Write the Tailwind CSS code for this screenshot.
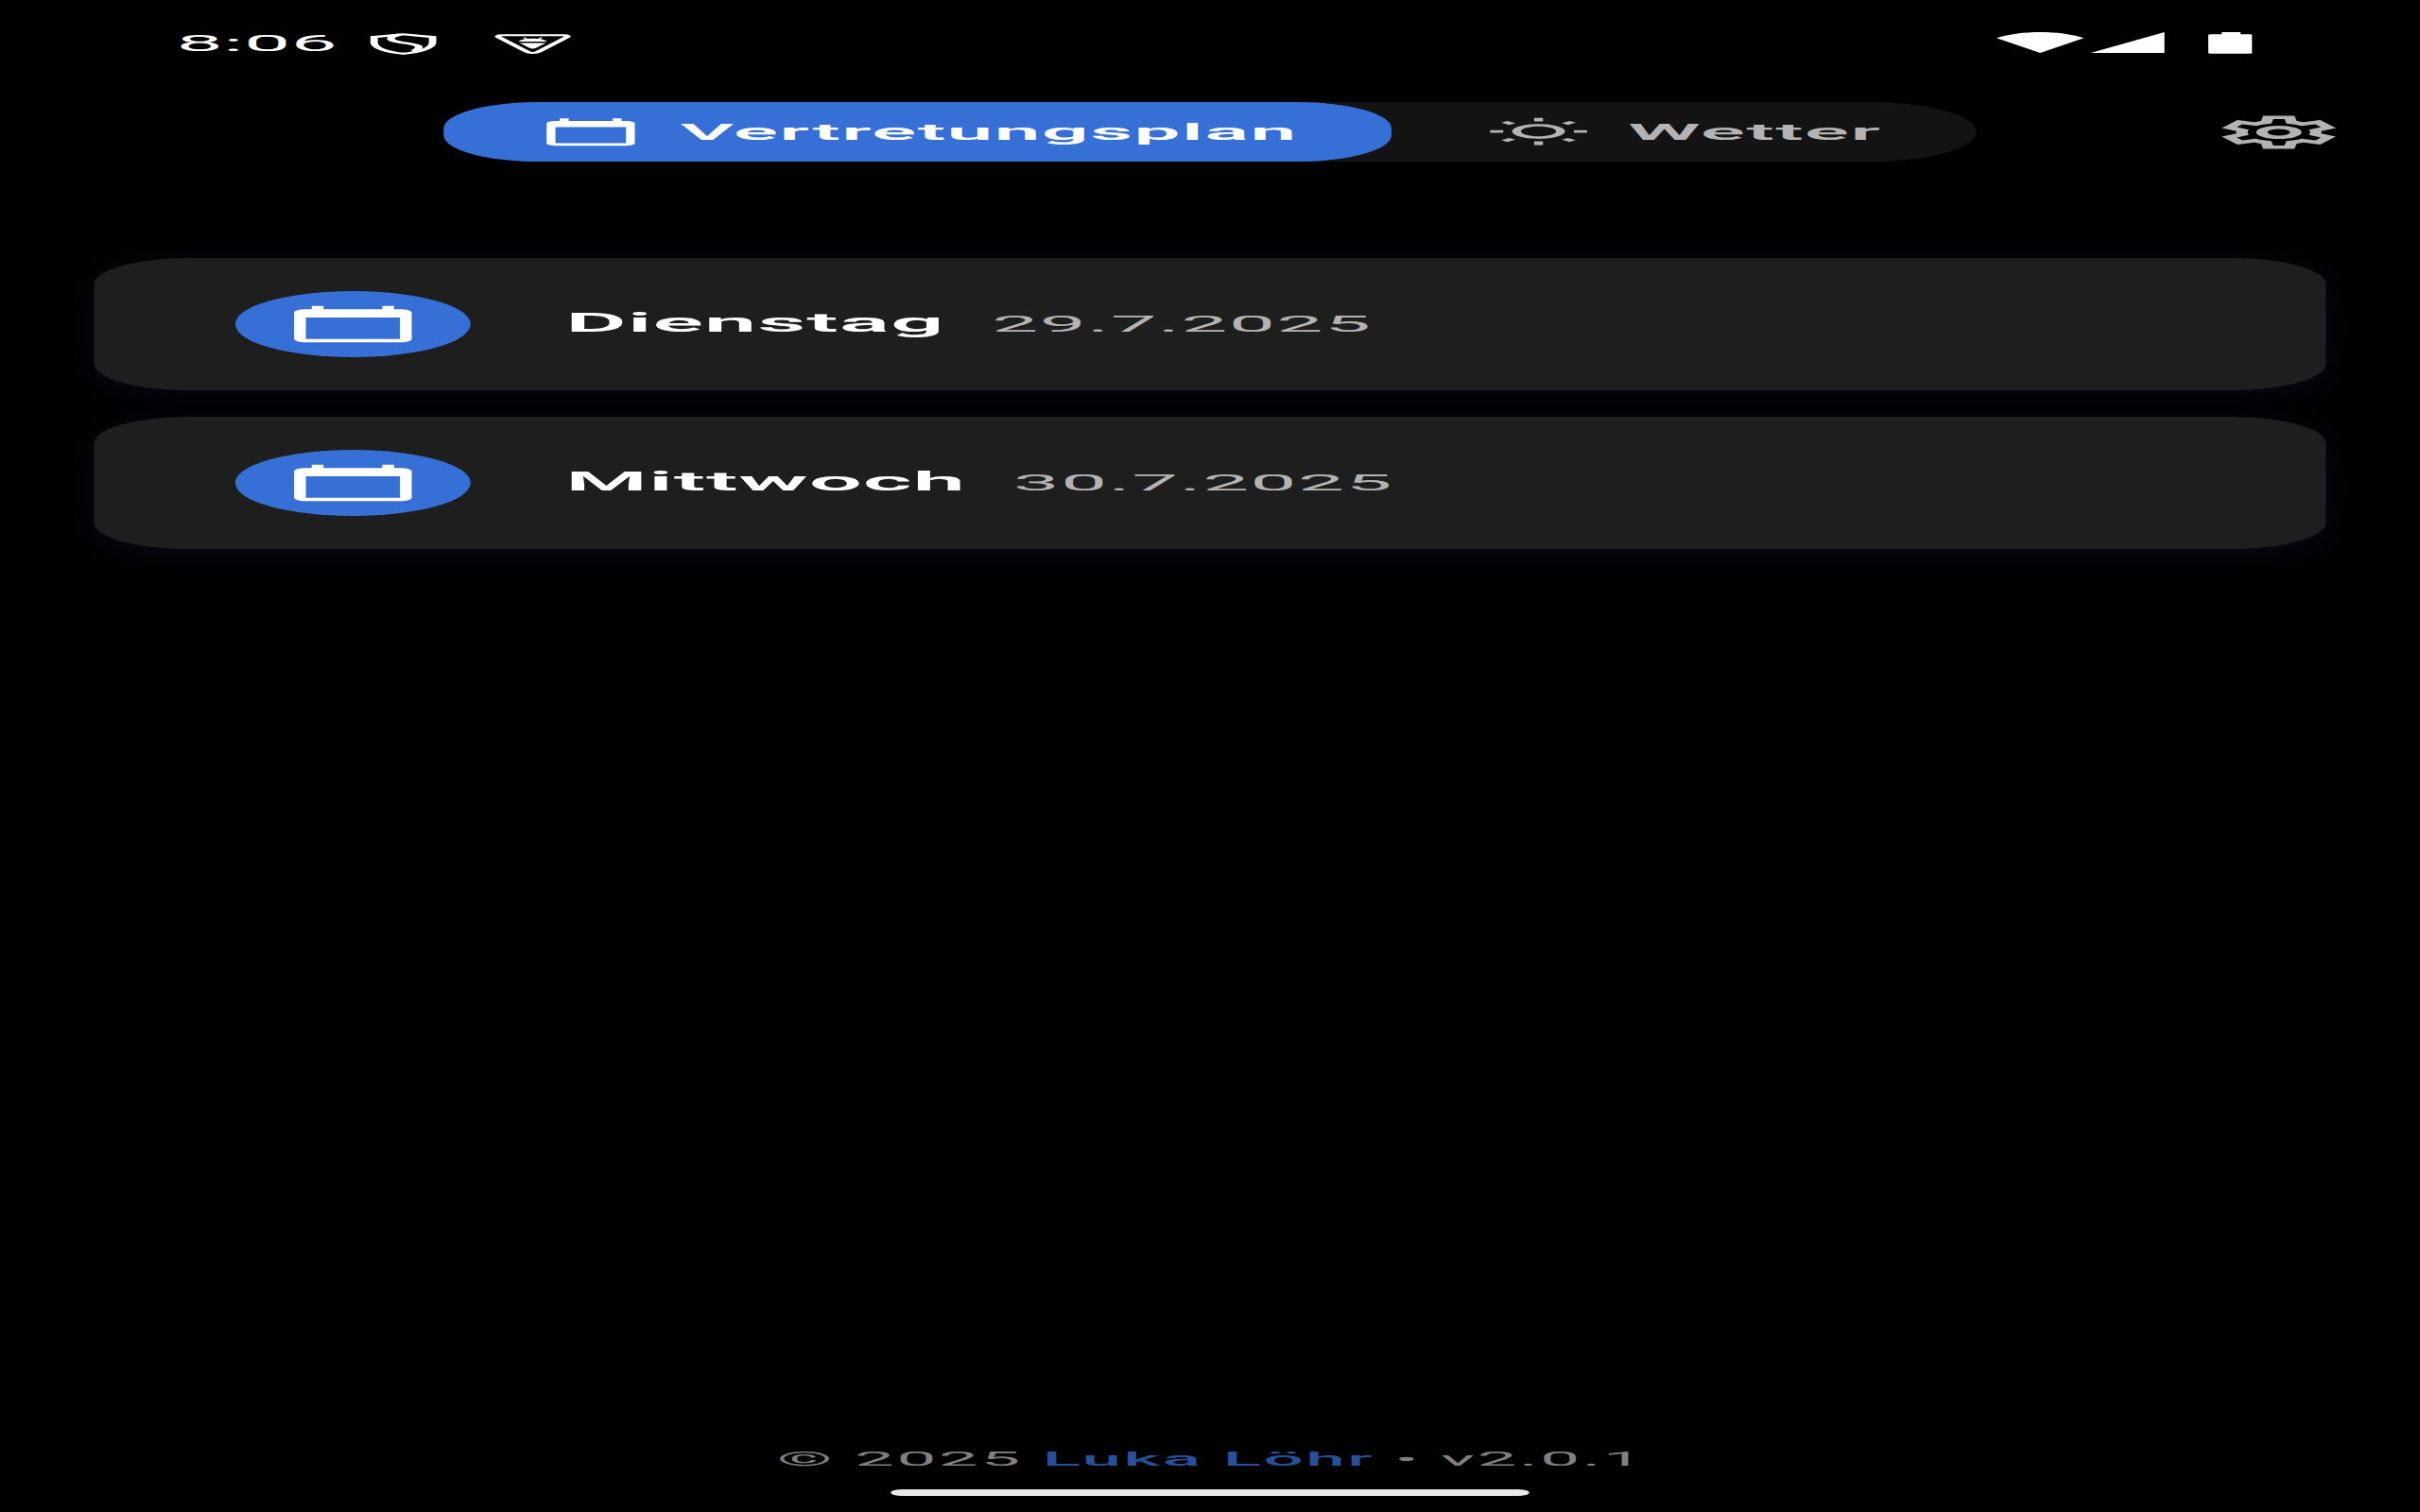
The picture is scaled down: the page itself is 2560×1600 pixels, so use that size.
<!DOCTYPE html>
<html lang="de">
<head>
<meta charset="utf-8">
<title>Vertretungsplan</title>
<script src="https://cdn.jsdelivr.net/npm/@tailwindcss/browser@4"></script>
</head>
<body class="h-[1600px] w-[2560px] overflow-hidden bg-black font-['Roboto',sans-serif]">
<svg class="hidden">
  <symbol id="calendar" viewBox="0 0 24 24"><path d="M20 3h-1V1h-2v2H7V1H5v2H4c-1.100 0-2 .9-2 2v16c0 1.100.9 2 2 2h16c1.100 0 2-.9 2-2V5c0-1.100-.9-2-2-2zm0 18H4V8h16v13z"/></symbol>
</svg>
<!-- Phone layout, stretched horizontally to fill the wide viewport -->
<div class="flex h-[1600px] w-[720px] origin-top-left scale-x-[3.5556] flex-col">
  <div class="flex h-[91px] shrink-0 items-start pt-[31px] pr-[50px] pl-[52.500px] text-white">
    <span class="w-[57.800px] text-[24.5px] leading-[29px] tracking-[0.2px]">8:06</span>
    <svg class="mt-[4px] h-[23px] w-[20px]" viewBox="0 0 20 23" fill="none" stroke="white" stroke-width="2.200">
      <path d="M10 1.300 1.300 4.100V10c0 6 4 10.500 8.700 11.800 4.700-1.300 8.700-5.800 8.700-11.800V4.100z"/>
      <path d="M9 1.500C5 4.500 5.500 8 9.500 10c4.500 2 7 4 3.500 9" stroke-width="2.300"/>
    </svg>
    <svg class="mt-[4px] ml-[17px] h-[23px] w-[23px]" viewBox="0 0 23 23">
      <path d="M2.500 2.300h18c1.200 0 1.600 1.200 1 2.200l-8.300 15.300c-.8 1.500-2.600 1.500-3.400 0L1.500 4.500c-.6-1-.2-2.200 1-2.200z" fill="none" stroke="white" stroke-width="2"/>
      <path d="M7.200 9c.3-1.300 1-2.200 2.100-2.800l-.8-1.400.6-.3.900 1.500c1-.3 2-.3 3 0l.9-1.500.6.300-.8 1.400c1.100.6 1.800 1.500 2.100 2.800zM7.600 10.500h7.800l-2.900 5.200c-.5.9-1.500.9-2 0z" fill="white"/>
    </svg>
    <div class="ml-auto flex">
      <svg class="mt-[3px] h-[22px] w-[26px]" viewBox="0 0 26 22"><path d="M0 6.200C7.500-2 18.500-2 26 6.200L13 22z" fill="white"/></svg>
      <svg class="mt-[3px] ml-[2px] h-[22px] w-[22px]" viewBox="0 0 22 22"><path d="M0 22 22 0V22z" fill="white"/></svg>
      <svg class="mt-[3px] ml-[12.600px] h-[23px] w-[13.400px]" viewBox="0 0 13.400 23"><path d="M4 0h5.600v2.300h2.800q1 0 1 1v18.400q0 1-1 1H1q-1 0-1-1V3.300q0-1 1-1h3z" fill="white"/></svg>
    </div>
  </div>

  <header class="grid shrink-0 grid-cols-[1fr_auto_1fr] items-center px-[21px] pt-[17px]">
    <nav class="col-start-2 flex h-[63px] rounded-[31.500px] bg-[#131313] text-[24.5px] font-semibold">
      <div class="flex w-[281.600px] items-center gap-[10.500px] rounded-[28px] bg-[#3670d6] pl-[28px] text-white">
        <svg class="size-[31.500px]" fill="currentColor"><use href="#calendar"/></svg>
        <span class="pt-[2px] tracking-[0.44px]">Vertretungsplan</span>
      </div>
      <div class="flex w-[173.600px] items-center gap-[10.700px] pl-[28.200px] text-[#b3b3b3]">
        <svg class="size-[31.500px]" viewBox="0 0 24 24" fill="currentColor"><path d="M6.760 4.840l-1.800-1.790-1.410 1.410 1.790 1.790 1.420-1.410zM4 10.500H1v2h3v-2zM13 .55h-2V3.500h2V.55zm7.450 3.910l-1.410-1.410-1.790 1.790 1.410 1.410 1.790-1.790zM17.240 18.160l1.790 1.800 1.410-1.410-1.800-1.790-1.400 1.400zM20 10.500v2h3v-2h-3zm-8-5c-3.310 0-6 2.690-6 6s2.690 6 6 6 6-2.690 6-6-2.690-6-6-6zm0 10c-2.210 0-4-1.790-4-4s1.790-4 4-4 4 1.790 4 4-1.790 4-4 4zM11 22.450h2V19.500h-2v2.950zM3.550 18.540l1.410 1.410 1.790-1.800-1.410-1.410-1.790 1.800z"/></svg>
        <span class="pt-[2px] tracking-[0.44px]">Wetter</span>
      </div>
    </nav>
    <svg class="size-[42px] scale-x-[0.965] justify-self-end text-[#b3b3b3]" viewBox="0 -960 960 960" fill="currentColor" fill-rule="evenodd"><path d="m370-80-16-128q-13-5-24.500-12T307-235l-119 50L78-375l103-78q-1-7-1-13.500v-27q0-6.500 1-13.500L78-585l110-190 119 50q11-8 23-15t24-12l16-128h220l16 128q13 5 24.500 12t22.500 15l119-50 110 190-103 78q1 7 1 13.500v27q0 6.500-2 13.500l103 78-110 190-118-50q-11 8-23 15t-24 12L590-80H370Zm70-80h79l14-106q31-8 57.500-23.500T639-327l99 41 39-68-86-65q5-14 7-29.500t2-31.500q0-16-2-31.500t-7-29.500l86-65-39-68-99 42q-22-23-48.500-38.500T533-694l-13-106h-79l-14 106q-31 8-57.500 23.500T321-633l-99-41-39 68 86 64q-5 15-7 30t-2 32q0 16 2 31t7 30l-86 65 39 68 99-42q22 23 48.500 38.500T427-266l13 106Z"/><circle cx="480" cy="-480" r="120" fill="none" stroke="currentColor" stroke-width="80"/></svg>
  </header>

  <main class="flex flex-1 flex-col gap-[28px] px-[28px] pt-[102px]">
    <section class="flex h-[140px] items-center rounded-[28px] bg-[#1e1e1e] pl-[42px] shadow-[0_5px_18px_rgba(54,112,214,0.1)]">
      <div class="flex size-[70px] items-center justify-center rounded-full bg-[#3670d6] text-white">
        <svg class="size-[42px]" fill="currentColor"><use href="#calendar"/></svg>
      </div>
      <div class="ml-[28.200px] flex items-baseline gap-[14px] pb-[2px]">
        <span class="text-[28px] font-semibold tracking-[0.24px] text-white">Dienstag</span>
        <span class="text-[24.5px] tracking-[0.42px] text-[#b3b3b3]">29.7.2025</span>
      </div>
    </section>
    <section class="flex h-[140px] items-center rounded-[28px] bg-[#1e1e1e] pl-[42px] shadow-[0_5px_18px_rgba(54,112,214,0.1)]">
      <div class="flex size-[70px] items-center justify-center rounded-full bg-[#3670d6] text-white">
        <svg class="size-[42px]" fill="currentColor"><use href="#calendar"/></svg>
      </div>
      <div class="ml-[28.200px] flex items-baseline gap-[14px] pb-[2px]">
        <span class="text-[28px] font-semibold tracking-[0.24px] text-white">Mittwoch</span>
        <span class="text-[24.5px] tracking-[0.42px] text-[#b3b3b3]">30.7.2025</span>
      </div>
    </section>
  </main>

  <footer class="flex flex-col items-center pb-[17.500px]">
    <p class="pl-[0.600px] text-[21px] leading-[28px] tracking-[0.7px] whitespace-nowrap text-[#808080]">© 2025 <span class="font-medium text-[#27509a]">Luka Löhr</span> • v2.0.1</p>
    <div class="mt-[17.500px] h-[7px] w-[189.400px] rounded-full bg-[#e9e7ea]"></div>
  </footer>
</div>
</body>
</html>
